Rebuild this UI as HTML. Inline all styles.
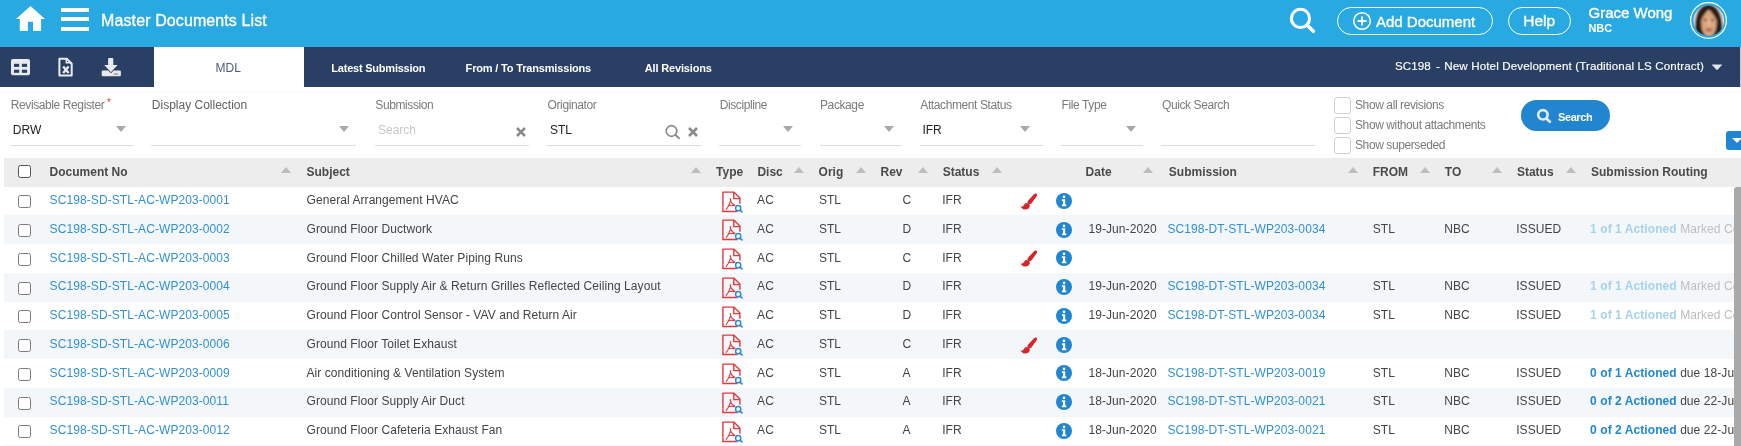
<!DOCTYPE html>
<html><head><meta charset="utf-8">
<style>
*{margin:0;padding:0;box-sizing:border-box}
html,body{width:1741px;height:446px;overflow:hidden;background:#fff;font-family:"Liberation Sans",sans-serif}
.a{position:absolute;white-space:nowrap}
#hdr{position:absolute;left:0;top:0;width:1741px;height:47px;background:#29a9e1}
#nav{position:absolute;left:0;top:47px;width:1741px;height:39.5px;background:#2a3f64}
.t{font-size:12px;line-height:14px}
.lbl{color:#7b7b7b;letter-spacing:-0.4px}
.val{color:#222}
.ul{position:absolute;top:144.5px;height:1px;background:#dcdcdc}
.car{position:absolute;top:125.9px;margin-left:-0.6px;width:0;height:0;border-left:5.2px solid transparent;border-right:5.2px solid transparent;border-top:6px solid #a9a9a9}
.cb{position:absolute;left:1334px;width:17px;height:17px;border:1px solid #cfcfcf;border-radius:3px;background:#fff}
#th{position:absolute;left:4.25px;top:157.75px;width:1737px;height:28.9px;background:#ededed}
.hc{position:absolute;top:164.5px;font-size:12px;line-height:14px;font-weight:bold;color:#4a4a4a}
.sa{position:absolute;top:167.1px;width:0;height:0;border-left:5.8px solid transparent;border-right:5.8px solid transparent;border-bottom:6.2px solid #bdbdbd}
.row{position:absolute;left:4.25px;width:1730px;height:28.75px}
.row.s{background:#f4f7fa}
.c{position:absolute;font-size:12px;line-height:14px;color:#444;white-space:nowrap;letter-spacing:0.07px}
.lk{color:#3190d4;letter-spacing:0.085px}
.rcb{position:absolute;left:13.5px;top:8.8px;width:13px;height:13px;border:1.3px solid #7a7a7a;border-radius:2.5px;background:#fff}
</style></head><body><div id="wrap" style="position:absolute;left:0;top:0;width:1741px;height:446px;will-change:transform">
<div id="hdr"></div>
<!-- home icon -->
<svg class="a" style="left:15px;top:5px" width="31" height="28" viewBox="0 0 31 28">
<path d="M15.5 1 L30 14 L26.1 14 L26.1 26 L18 26 L18 16.8 L12.9 16.8 L12.9 26 L4.8 26 L4.8 14 L1 14 Z" fill="#fff"/>
</svg>
<!-- hamburger -->
<div class="a" style="left:61px;top:8px;width:28px;height:4px;background:#fff"></div>
<div class="a" style="left:61px;top:17.4px;width:28px;height:4px;background:#fff"></div>
<div class="a" style="left:61px;top:26.9px;width:28px;height:4px;background:#fff"></div>
<div class="a" style="left:101.1px;top:12.3px;font-size:16px;line-height:18px;color:#fff;letter-spacing:0.1px;-webkit-text-stroke:0.35px #fff">Master Documents List</div>

<!-- right header -->
<svg class="a" style="left:1287px;top:5px" width="32" height="31" viewBox="0 0 32 31">
<circle cx="13.5" cy="13.4" r="9.1" fill="none" stroke="#fff" stroke-width="3"/>
<path d="M20.3 20.3 L26.3 26.3" stroke="#fff" stroke-width="3.6" stroke-linecap="round"/>
</svg>
<div class="a" style="left:1337px;top:7px;width:156px;height:28px;border:1px solid #fff;border-radius:14px"></div>
<svg class="a" style="left:1352px;top:11px" width="20" height="20" viewBox="0 0 20 20">
<circle cx="10" cy="10" r="8.3" fill="none" stroke="#fff" stroke-width="1.6"/>
<path d="M10 5.5 V14.5 M5.5 10 H14.5" stroke="#fff" stroke-width="1.8"/>
</svg>
<div class="a" style="left:1376px;top:13px;font-size:15px;line-height:17px;color:#fff;-webkit-text-stroke:0.35px #fff">Add Document</div>
<div class="a" style="left:1508px;top:7px;width:63px;height:28px;border:1px solid #fff;border-radius:14px"></div>
<div class="a" style="left:1523.3px;top:12px;font-size:15.5px;line-height:17px;color:#fff;-webkit-text-stroke:0.35px #fff">Help</div>
<div class="a" style="left:1588.5px;top:3.6px;font-size:15px;line-height:17px;color:#fff;-webkit-text-stroke:0.35px #fff">Grace Wong</div>
<div class="a" style="left:1588.5px;top:22px;font-size:10.9px;line-height:12px;color:#fff;font-weight:bold">NBC</div>
<svg class="a" style="left:1689px;top:1px" width="39" height="39" viewBox="0 0 39 39">
<circle cx="19.5" cy="19.5" r="17.9" fill="none" stroke="#fff" stroke-width="1.3"/>
<defs><clipPath id="av"><circle cx="19.8" cy="19.5" r="15.3"/></clipPath>
<filter id="bl" x="-20%" y="-20%" width="140%" height="140%"><feGaussianBlur stdDeviation="0.9"/></filter></defs>
<g clip-path="url(#av)"><g filter="url(#bl)">
<rect x="0" y="0" width="39" height="39" fill="#e9e0dc"/>
<path d="M6.5 40 C5 24 5 5 19.5 3 C34 5 34.5 24 33 40 Z" fill="#2d1e18"/>
<path d="M12.3 20 C12.5 12 15.5 8.5 19.8 9.2 C24.5 8.5 27.5 12 27.6 20 C27.8 29 25 35.5 19.9 35.8 C14.8 35.5 12 29 12.3 20 Z" fill="#d9a67f"/>
<path d="M11.8 18 C12 11 15 7.5 19.8 8.6 C17 11 14.5 14.5 12.3 19 Z" fill="#2d1e18"/>
<path d="M27.8 18 C27.6 11 24.6 7.5 19.8 8.6 C22.6 11 25 14.5 27.3 19 Z" fill="#2d1e18"/>
<ellipse cx="16.2" cy="19" rx="1.7" ry="0.9" fill="#5a3a2c"/>
<ellipse cx="23.6" cy="19" rx="1.7" ry="0.9" fill="#5a3a2c"/>
<ellipse cx="19.9" cy="28.8" rx="3.6" ry="1.6" fill="#b45f5c"/>
<rect x="18.8" y="18" width="2.2" height="7" fill="#e7bb98"/>
</g></g>
</svg>

<div id="nav"></div>
<!-- tool icons -->
<svg class="a" style="left:10px;top:58px" width="21" height="19" viewBox="0 0 21 19">
<rect x="1" y="1" width="19" height="16.2" rx="2" fill="#e9eaee"/>
<rect x="4" y="5.8" width="5.2" height="3.1" fill="#2a3f64"/>
<rect x="11.9" y="5.8" width="5.2" height="3.1" fill="#2a3f64"/>
<rect x="4" y="11.7" width="5.2" height="3.1" fill="#2a3f64"/>
<rect x="11.9" y="11.7" width="5.2" height="3.1" fill="#2a3f64"/>
</svg>
<svg class="a" style="left:57px;top:57px" width="18" height="21" viewBox="0 0 18 21">
<path d="M2.4 1.8 H9.8 L14.7 6.7 V18.5 H2.4 Z" fill="none" stroke="#e9eaee" stroke-width="2" stroke-linejoin="round"/>
<path d="M9.3 1.8 V5.8 H14.7" fill="none" stroke="#e9eaee" stroke-width="1.5"/>
<path d="M6.2 9.6 L11.6 16 M11.6 9.6 L6.2 16" stroke="#e9eaee" stroke-width="2.3"/>
</svg>
<svg class="a" style="left:100px;top:57px" width="22" height="21" viewBox="0 0 22 21">
<rect x="8.1" y="1" width="5.2" height="9" rx="1" fill="#e9eaee"/>
<path d="M4.3 8.1 H17.6 L10.95 15.3 Z" fill="#e9eaee"/>
<path d="M2.9 13.5 H8.2 L10.95 16.2 L13.7 13.5 H19.7 Q20.9 13.5 20.9 14.7 V18 Q20.9 19.2 19.7 19.2 H2.9 Q1.7 19.2 1.7 18 V14.7 Q1.7 13.5 2.9 13.5 Z" fill="#e9eaee"/>
<rect x="13.8" y="16.6" width="4.4" height="0.9" fill="#5a6a88"/>
</svg>
<!-- tabs -->
<div class="a" style="left:154px;top:47px;width:150px;height:40px;background:#fff"></div>
<div class="a t" style="left:215.5px;top:61px;color:#4b5b78;letter-spacing:0.1px">MDL</div>
<div class="a" style="left:331.3px;top:61.4px;font-size:11px;line-height:14px;color:#fff;font-weight:bold;letter-spacing:-0.22px">Latest Submission</div>
<div class="a" style="left:465.6px;top:61.4px;font-size:11px;line-height:14px;color:#fff;font-weight:bold;letter-spacing:-0.17px">From / To Transmissions</div>
<div class="a" style="left:644.8px;top:61.4px;font-size:11px;line-height:14px;color:#fff;font-weight:bold;letter-spacing:-0.16px">All Revisions</div>
<div class="a" style="left:1394.9px;top:59.3px;font-size:11.6px;line-height:14px;color:#fff;letter-spacing:0.1px;-webkit-text-stroke:0.15px #fff">SC198</div><div class="a" style="left:1436px;top:59.3px;font-size:11.6px;line-height:14px;color:#fff;-webkit-text-stroke:0.15px #fff">-</div><div class="a" style="left:1444.3px;top:59.3px;font-size:11.6px;line-height:14px;color:#fff;letter-spacing:0.12px;-webkit-text-stroke:0.15px #fff">New Hotel Development (Traditional LS Contract)</div>
<svg class="a" style="left:1711px;top:63px" width="12" height="8" viewBox="0 0 12 8"><path d="M1.6 1.4 H10.4 Q11.4 1.4 10.7 2.2 L6.8 6.4 Q6 7.2 5.2 6.4 L1.3 2.2 Q0.6 1.4 1.6 1.4 Z" fill="#e2e5ec"/></svg>
<div class="a" style="left:1740px;top:47px;width:1px;height:40px;background:#c9ccd3"></div>

<!-- filters -->
<div class="a" style="left:0;top:91px;width:1741px;height:2px;background:#fbfbfb"></div>
<div class="a t lbl" style="left:10.8px;top:98px">Revisable Register</div>
<div class="a" style="left:107px;top:98px;font-size:10px;line-height:10px;color:#e53935">*</div>
<div class="a t" style="left:151.8px;top:98px;color:#616161">Display Collection</div>
<div class="a t lbl" style="left:375.3px;top:98px">Submission</div>
<div class="a t lbl" style="left:547.6px;top:98px">Originator</div>
<div class="a t lbl" style="left:719.7px;top:98px">Discipline</div>
<div class="a t lbl" style="left:820px;top:98px">Package</div>
<div class="a t lbl" style="left:920.3px;top:98px">Attachment Status</div>
<div class="a t lbl" style="left:1061.6px;top:98px">File Type</div>
<div class="a t lbl" style="left:1162px;top:98px">Quick Search</div>

<div class="a t val" style="left:12.8px;top:123px">DRW</div>
<div class="a t" style="left:378px;top:123px;color:#c8c8c8">Search</div>
<div class="a t val" style="left:550px;top:123px">STL</div>
<div class="a t val" style="left:922.4px;top:123px">IFR</div>

<div class="ul" style="left:10px;width:123px"></div>
<div class="ul" style="left:151px;width:205px"></div>
<div class="ul" style="left:375px;width:154px"></div>
<div class="ul" style="left:547px;width:154px"></div>
<div class="ul" style="left:719px;width:82px"></div>
<div class="ul" style="left:819.5px;width:81.5px"></div>
<div class="ul" style="left:920px;width:123px"></div>
<div class="ul" style="left:1061px;width:82px"></div>
<div class="ul" style="left:1161px;width:154px"></div>

<div class="car" style="left:116.5px"></div>
<div class="car" style="left:340px"></div>
<div class="car" style="left:784px"></div>
<div class="car" style="left:884.5px"></div>
<div class="car" style="left:1021px"></div>
<div class="car" style="left:1126.7px"></div>

<svg class="a" style="left:515px;top:126px" width="12" height="12" viewBox="0 0 12 12"><path d="M2 2 L10 10 M10 2 L2 10" stroke="#8a8a8a" stroke-width="2.6"/></svg>
<svg class="a" style="left:687px;top:126px" width="12" height="12" viewBox="0 0 12 12"><path d="M2 2 L10 10 M10 2 L2 10" stroke="#8a8a8a" stroke-width="2.6"/></svg>
<svg class="a" style="left:664px;top:124px" width="17" height="16" viewBox="0 0 17 16">
<circle cx="7.5" cy="7" r="5.3" fill="none" stroke="#8a8a8a" stroke-width="1.7"/>
<path d="M11.3 10.8 L15 14.2" stroke="#8a8a8a" stroke-width="1.9" stroke-linecap="round"/>
</svg>

<div class="cb" style="top:97px"></div>
<div class="cb" style="top:117px"></div>
<div class="cb" style="top:137px"></div>
<div class="a t lbl" style="left:1355px;top:98px">Show all revisions</div>
<div class="a t lbl" style="left:1355px;top:118px">Show without attachments</div>
<div class="a t lbl" style="left:1355px;top:138px">Show superseded</div>

<div class="a" style="left:1521px;top:100px;width:89px;height:31px;border-radius:15.5px;background:#2185d0"></div>
<svg class="a" style="left:1535px;top:107px" width="18" height="17" viewBox="0 0 18 17">
<circle cx="7.9" cy="7.8" r="4.7" fill="none" stroke="#dfeaf6" stroke-width="2.7"/>
<path d="M11.4 11.4 L14.8 14.8" stroke="#dfeaf6" stroke-width="2.8" stroke-linecap="round"/>
</svg>
<div class="a" style="left:1558px;top:110.5px;font-size:11px;line-height:13px;color:#fff;font-weight:bold;letter-spacing:-0.4px">Search</div>
<div class="a" style="left:1726px;top:130.8px;width:20px;height:19.3px;border-radius:3px;background:#2185d0"></div>
<div class="a" style="left:1731.5px;top:138px;width:0;height:0;border-left:5px solid transparent;border-right:5px solid transparent;border-top:5.5px solid #fff"></div>

<!-- table header -->
<div id="th"></div>
<div class="a" style="left:18px;top:165px;width:13px;height:13px;border:1.3px solid #555;border-radius:2.5px;background:#fff"></div>
<div class="hc" style="left:49.6px">Document No</div>
<div class="hc" style="left:306.5px">Subject</div>
<div class="hc" style="left:716.1px">Type</div>
<div class="hc" style="left:757.4px">Disc</div>
<div class="hc" style="left:818.6px">Orig</div>
<div class="hc" style="left:880.5px">Rev</div>
<div class="hc" style="left:942.7px">Status</div>
<div class="hc" style="left:1085.6px">Date</div>
<div class="hc" style="left:1168.8px">Submission</div>
<div class="hc" style="left:1372.7px">FROM</div>
<div class="hc" style="left:1444.8px">TO</div>
<div class="hc" style="left:1516.9px">Status</div>
<div class="hc" style="left:1591px">Submission Routing</div>
<div class="sa" style="left:281px"></div>
<div class="sa" style="left:691.4px"></div>
<div class="sa" style="left:794.4px"></div>
<div class="sa" style="left:855.6px"></div>
<div class="sa" style="left:917.8px"></div>
<div class="sa" style="left:991.5px"></div>
<div class="sa" style="left:1142.5px"></div>
<div class="sa" style="left:1348px"></div>
<div class="sa" style="left:1420px"></div>
<div class="sa" style="left:1492px"></div>
<div class="sa" style="left:1565.7px"></div>

<div class="row" style="top:186.60px">
<div class="rcb"></div>
<div class="c lk" style="left:45.35px;top:6.60px">SC198-SD-STL-AC-WP203-0001</div>
<div class="c" style="left:302.25px;top:6.60px">General Arrangement HVAC</div>
<svg class="a" style="left:714.65px;top:3.1px" width="24" height="23" viewBox="0 0 24 23">
<path d="M3.9 17.6 V2.1 H14.8 L20.9 8.1 V13.8" fill="none" stroke="#e0393e" stroke-width="1.4" stroke-linejoin="round"/>
<path d="M3.9 17.6 V21.5 H18.4" fill="none" stroke="#e0393e" stroke-width="1.4"/>
<path d="M14.8 2.1 V8.6 H20.9" fill="none" stroke="#e0393e" stroke-width="1.4"/>
<path d="M11.2 8.6 C11.6 11.5 12.8 14 16 15.2 M11.5 11.2 C10.5 14.8 9 17.6 7.2 19.4 M9.3 15.7 C11.5 15.1 13.5 15.2 15 15.8" fill="none" stroke="#e0393e" stroke-width="1.15" stroke-linecap="round"/>
<circle cx="19.2" cy="18.2" r="2.6" fill="#fff" stroke="#2f8ad6" stroke-width="1.5"/>
<path d="M21 20.1 L23 21.9" stroke="#2f8ad6" stroke-width="1.7" stroke-linecap="round"/>
</svg>
<div class="c" style="left:752.85px;top:6.60px">AC</div>
<div class="c" style="left:814.65px;top:6.60px">STL</div>
<div class="c" style="left:898.35px;top:6.60px">C</div>
<div class="c" style="left:937.95px;top:6.60px">IFR</div>
<svg class="a" style="left:1015.75px;top:6.4px" width="18" height="18" viewBox="0 0 18 18">
<path d="M13.8 1.4 C14.8 0.3 16.8 0.2 17 1.5 C17.2 2.3 16.9 3 16.5 3.6 L11.4 10.6 C10.6 11.5 9.1 11.6 8.2 10.8 C7.3 10 7.3 8.7 8 7.8 Z" fill="#d9252a"/>
<path d="M7.1 10.1 C8.9 10.3 10.1 11.8 9.8 13.6 C9.3 15.8 6.7 16.9 4 16.4 C2.5 16.1 1.3 15.1 0.6 13.6 C2 14 3.1 13.5 3.8 12.3 C4.7 10.8 5.6 10 7.1 10.1 Z" fill="#d9252a"/>
</svg>
<svg class="a" style="left:1051.75px;top:6.2px" width="16" height="16" viewBox="0 0 16 16">
<circle cx="8" cy="8" r="8" fill="#2185d0"/>
<circle cx="8" cy="3.9" r="1.3" fill="#fff"/>
<path d="M5.9 6.3 H9.2 V11.6 H10.3 V13.2 H5.9 V11.6 H7 V7.9 H5.9 Z" fill="#fff"/>
</svg>
</div>
<div class="row s" style="top:215.35px">
<div class="rcb"></div>
<div class="c lk" style="left:45.35px;top:6.60px">SC198-SD-STL-AC-WP203-0002</div>
<div class="c" style="left:302.25px;top:6.60px">Ground Floor Ductwork</div>
<svg class="a" style="left:714.65px;top:3.1px" width="24" height="23" viewBox="0 0 24 23">
<path d="M3.9 17.6 V2.1 H14.8 L20.9 8.1 V13.8" fill="none" stroke="#e0393e" stroke-width="1.4" stroke-linejoin="round"/>
<path d="M3.9 17.6 V21.5 H18.4" fill="none" stroke="#e0393e" stroke-width="1.4"/>
<path d="M14.8 2.1 V8.6 H20.9" fill="none" stroke="#e0393e" stroke-width="1.4"/>
<path d="M11.2 8.6 C11.6 11.5 12.8 14 16 15.2 M11.5 11.2 C10.5 14.8 9 17.6 7.2 19.4 M9.3 15.7 C11.5 15.1 13.5 15.2 15 15.8" fill="none" stroke="#e0393e" stroke-width="1.15" stroke-linecap="round"/>
<circle cx="19.2" cy="18.2" r="2.6" fill="#fff" stroke="#2f8ad6" stroke-width="1.5"/>
<path d="M21 20.1 L23 21.9" stroke="#2f8ad6" stroke-width="1.7" stroke-linecap="round"/>
</svg>
<div class="c" style="left:752.85px;top:6.60px">AC</div>
<div class="c" style="left:814.65px;top:6.60px">STL</div>
<div class="c" style="left:898.35px;top:6.60px">D</div>
<div class="c" style="left:937.95px;top:6.60px">IFR</div>
<svg class="a" style="left:1051.75px;top:6.2px" width="16" height="16" viewBox="0 0 16 16">
<circle cx="8" cy="8" r="8" fill="#2185d0"/>
<circle cx="8" cy="3.9" r="1.3" fill="#fff"/>
<path d="M5.9 6.3 H9.2 V11.6 H10.3 V13.2 H5.9 V11.6 H7 V7.9 H5.9 Z" fill="#fff"/>
</svg>
<div class="c" style="left:1084.25px;top:6.60px">19-Jun-2020</div>
<div class="c lk" style="left:1163.15px;top:6.60px">SC198-DT-STL-WP203-0034</div>
<div class="c" style="left:1368.45px;top:6.60px">STL</div>
<div class="c" style="left:1440.05px;top:6.60px">NBC</div>
<div class="c" style="left:1511.95px;top:6.60px">ISSUED</div>
<div class="c" style="left:1585.85px;top:6.60px;width:144.10px;overflow:hidden"><b style="color:#a6d2ea">1 of 1 Actioned</b> <span style="color:#bdbdbd">Marked Complete</span></div>
</div>
<div class="row" style="top:244.10px">
<div class="rcb"></div>
<div class="c lk" style="left:45.35px;top:6.60px">SC198-SD-STL-AC-WP203-0003</div>
<div class="c" style="left:302.25px;top:6.60px">Ground Floor Chilled Water Piping Runs</div>
<svg class="a" style="left:714.65px;top:3.1px" width="24" height="23" viewBox="0 0 24 23">
<path d="M3.9 17.6 V2.1 H14.8 L20.9 8.1 V13.8" fill="none" stroke="#e0393e" stroke-width="1.4" stroke-linejoin="round"/>
<path d="M3.9 17.6 V21.5 H18.4" fill="none" stroke="#e0393e" stroke-width="1.4"/>
<path d="M14.8 2.1 V8.6 H20.9" fill="none" stroke="#e0393e" stroke-width="1.4"/>
<path d="M11.2 8.6 C11.6 11.5 12.8 14 16 15.2 M11.5 11.2 C10.5 14.8 9 17.6 7.2 19.4 M9.3 15.7 C11.5 15.1 13.5 15.2 15 15.8" fill="none" stroke="#e0393e" stroke-width="1.15" stroke-linecap="round"/>
<circle cx="19.2" cy="18.2" r="2.6" fill="#fff" stroke="#2f8ad6" stroke-width="1.5"/>
<path d="M21 20.1 L23 21.9" stroke="#2f8ad6" stroke-width="1.7" stroke-linecap="round"/>
</svg>
<div class="c" style="left:752.85px;top:6.60px">AC</div>
<div class="c" style="left:814.65px;top:6.60px">STL</div>
<div class="c" style="left:898.35px;top:6.60px">C</div>
<div class="c" style="left:937.95px;top:6.60px">IFR</div>
<svg class="a" style="left:1015.75px;top:6.4px" width="18" height="18" viewBox="0 0 18 18">
<path d="M13.8 1.4 C14.8 0.3 16.8 0.2 17 1.5 C17.2 2.3 16.9 3 16.5 3.6 L11.4 10.6 C10.6 11.5 9.1 11.6 8.2 10.8 C7.3 10 7.3 8.7 8 7.8 Z" fill="#d9252a"/>
<path d="M7.1 10.1 C8.9 10.3 10.1 11.8 9.8 13.6 C9.3 15.8 6.7 16.9 4 16.4 C2.5 16.1 1.3 15.1 0.6 13.6 C2 14 3.1 13.5 3.8 12.3 C4.7 10.8 5.6 10 7.1 10.1 Z" fill="#d9252a"/>
</svg>
<svg class="a" style="left:1051.75px;top:6.2px" width="16" height="16" viewBox="0 0 16 16">
<circle cx="8" cy="8" r="8" fill="#2185d0"/>
<circle cx="8" cy="3.9" r="1.3" fill="#fff"/>
<path d="M5.9 6.3 H9.2 V11.6 H10.3 V13.2 H5.9 V11.6 H7 V7.9 H5.9 Z" fill="#fff"/>
</svg>
</div>
<div class="row s" style="top:272.85px">
<div class="rcb"></div>
<div class="c lk" style="left:45.35px;top:6.60px">SC198-SD-STL-AC-WP203-0004</div>
<div class="c" style="left:302.25px;top:6.60px">Ground Floor Supply Air &amp; Return Grilles Reflected Ceiling Layout</div>
<svg class="a" style="left:714.65px;top:3.1px" width="24" height="23" viewBox="0 0 24 23">
<path d="M3.9 17.6 V2.1 H14.8 L20.9 8.1 V13.8" fill="none" stroke="#e0393e" stroke-width="1.4" stroke-linejoin="round"/>
<path d="M3.9 17.6 V21.5 H18.4" fill="none" stroke="#e0393e" stroke-width="1.4"/>
<path d="M14.8 2.1 V8.6 H20.9" fill="none" stroke="#e0393e" stroke-width="1.4"/>
<path d="M11.2 8.6 C11.6 11.5 12.8 14 16 15.2 M11.5 11.2 C10.5 14.8 9 17.6 7.2 19.4 M9.3 15.7 C11.5 15.1 13.5 15.2 15 15.8" fill="none" stroke="#e0393e" stroke-width="1.15" stroke-linecap="round"/>
<circle cx="19.2" cy="18.2" r="2.6" fill="#fff" stroke="#2f8ad6" stroke-width="1.5"/>
<path d="M21 20.1 L23 21.9" stroke="#2f8ad6" stroke-width="1.7" stroke-linecap="round"/>
</svg>
<div class="c" style="left:752.85px;top:6.60px">AC</div>
<div class="c" style="left:814.65px;top:6.60px">STL</div>
<div class="c" style="left:898.35px;top:6.60px">D</div>
<div class="c" style="left:937.95px;top:6.60px">IFR</div>
<svg class="a" style="left:1051.75px;top:6.2px" width="16" height="16" viewBox="0 0 16 16">
<circle cx="8" cy="8" r="8" fill="#2185d0"/>
<circle cx="8" cy="3.9" r="1.3" fill="#fff"/>
<path d="M5.9 6.3 H9.2 V11.6 H10.3 V13.2 H5.9 V11.6 H7 V7.9 H5.9 Z" fill="#fff"/>
</svg>
<div class="c" style="left:1084.25px;top:6.60px">19-Jun-2020</div>
<div class="c lk" style="left:1163.15px;top:6.60px">SC198-DT-STL-WP203-0034</div>
<div class="c" style="left:1368.45px;top:6.60px">STL</div>
<div class="c" style="left:1440.05px;top:6.60px">NBC</div>
<div class="c" style="left:1511.95px;top:6.60px">ISSUED</div>
<div class="c" style="left:1585.85px;top:6.60px;width:144.10px;overflow:hidden"><b style="color:#a6d2ea">1 of 1 Actioned</b> <span style="color:#bdbdbd">Marked Complete</span></div>
</div>
<div class="row" style="top:301.60px">
<div class="rcb"></div>
<div class="c lk" style="left:45.35px;top:6.60px">SC198-SD-STL-AC-WP203-0005</div>
<div class="c" style="left:302.25px;top:6.60px">Ground Floor Control Sensor - VAV and Return Air</div>
<svg class="a" style="left:714.65px;top:3.1px" width="24" height="23" viewBox="0 0 24 23">
<path d="M3.9 17.6 V2.1 H14.8 L20.9 8.1 V13.8" fill="none" stroke="#e0393e" stroke-width="1.4" stroke-linejoin="round"/>
<path d="M3.9 17.6 V21.5 H18.4" fill="none" stroke="#e0393e" stroke-width="1.4"/>
<path d="M14.8 2.1 V8.6 H20.9" fill="none" stroke="#e0393e" stroke-width="1.4"/>
<path d="M11.2 8.6 C11.6 11.5 12.8 14 16 15.2 M11.5 11.2 C10.5 14.8 9 17.6 7.2 19.4 M9.3 15.7 C11.5 15.1 13.5 15.2 15 15.8" fill="none" stroke="#e0393e" stroke-width="1.15" stroke-linecap="round"/>
<circle cx="19.2" cy="18.2" r="2.6" fill="#fff" stroke="#2f8ad6" stroke-width="1.5"/>
<path d="M21 20.1 L23 21.9" stroke="#2f8ad6" stroke-width="1.7" stroke-linecap="round"/>
</svg>
<div class="c" style="left:752.85px;top:6.60px">AC</div>
<div class="c" style="left:814.65px;top:6.60px">STL</div>
<div class="c" style="left:898.35px;top:6.60px">D</div>
<div class="c" style="left:937.95px;top:6.60px">IFR</div>
<svg class="a" style="left:1051.75px;top:6.2px" width="16" height="16" viewBox="0 0 16 16">
<circle cx="8" cy="8" r="8" fill="#2185d0"/>
<circle cx="8" cy="3.9" r="1.3" fill="#fff"/>
<path d="M5.9 6.3 H9.2 V11.6 H10.3 V13.2 H5.9 V11.6 H7 V7.9 H5.9 Z" fill="#fff"/>
</svg>
<div class="c" style="left:1084.25px;top:6.60px">19-Jun-2020</div>
<div class="c lk" style="left:1163.15px;top:6.60px">SC198-DT-STL-WP203-0034</div>
<div class="c" style="left:1368.45px;top:6.60px">STL</div>
<div class="c" style="left:1440.05px;top:6.60px">NBC</div>
<div class="c" style="left:1511.95px;top:6.60px">ISSUED</div>
<div class="c" style="left:1585.85px;top:6.60px;width:144.10px;overflow:hidden"><b style="color:#a6d2ea">1 of 1 Actioned</b> <span style="color:#bdbdbd">Marked Complete</span></div>
</div>
<div class="row s" style="top:330.35px">
<div class="rcb"></div>
<div class="c lk" style="left:45.35px;top:6.60px">SC198-SD-STL-AC-WP203-0006</div>
<div class="c" style="left:302.25px;top:6.60px">Ground Floor Toilet Exhaust</div>
<svg class="a" style="left:714.65px;top:3.1px" width="24" height="23" viewBox="0 0 24 23">
<path d="M3.9 17.6 V2.1 H14.8 L20.9 8.1 V13.8" fill="none" stroke="#e0393e" stroke-width="1.4" stroke-linejoin="round"/>
<path d="M3.9 17.6 V21.5 H18.4" fill="none" stroke="#e0393e" stroke-width="1.4"/>
<path d="M14.8 2.1 V8.6 H20.9" fill="none" stroke="#e0393e" stroke-width="1.4"/>
<path d="M11.2 8.6 C11.6 11.5 12.8 14 16 15.2 M11.5 11.2 C10.5 14.8 9 17.6 7.2 19.4 M9.3 15.7 C11.5 15.1 13.5 15.2 15 15.8" fill="none" stroke="#e0393e" stroke-width="1.15" stroke-linecap="round"/>
<circle cx="19.2" cy="18.2" r="2.6" fill="#fff" stroke="#2f8ad6" stroke-width="1.5"/>
<path d="M21 20.1 L23 21.9" stroke="#2f8ad6" stroke-width="1.7" stroke-linecap="round"/>
</svg>
<div class="c" style="left:752.85px;top:6.60px">AC</div>
<div class="c" style="left:814.65px;top:6.60px">STL</div>
<div class="c" style="left:898.35px;top:6.60px">C</div>
<div class="c" style="left:937.95px;top:6.60px">IFR</div>
<svg class="a" style="left:1015.75px;top:6.4px" width="18" height="18" viewBox="0 0 18 18">
<path d="M13.8 1.4 C14.8 0.3 16.8 0.2 17 1.5 C17.2 2.3 16.9 3 16.5 3.6 L11.4 10.6 C10.6 11.5 9.1 11.6 8.2 10.8 C7.3 10 7.3 8.7 8 7.8 Z" fill="#d9252a"/>
<path d="M7.1 10.1 C8.9 10.3 10.1 11.8 9.8 13.6 C9.3 15.8 6.7 16.9 4 16.4 C2.5 16.1 1.3 15.1 0.6 13.6 C2 14 3.1 13.5 3.8 12.3 C4.7 10.8 5.6 10 7.1 10.1 Z" fill="#d9252a"/>
</svg>
<svg class="a" style="left:1051.75px;top:6.2px" width="16" height="16" viewBox="0 0 16 16">
<circle cx="8" cy="8" r="8" fill="#2185d0"/>
<circle cx="8" cy="3.9" r="1.3" fill="#fff"/>
<path d="M5.9 6.3 H9.2 V11.6 H10.3 V13.2 H5.9 V11.6 H7 V7.9 H5.9 Z" fill="#fff"/>
</svg>
</div>
<div class="row" style="top:359.10px">
<div class="rcb"></div>
<div class="c lk" style="left:45.35px;top:6.60px">SC198-SD-STL-AC-WP203-0009</div>
<div class="c" style="left:302.25px;top:6.60px">Air conditioning &amp; Ventilation System</div>
<svg class="a" style="left:714.65px;top:3.1px" width="24" height="23" viewBox="0 0 24 23">
<path d="M3.9 17.6 V2.1 H14.8 L20.9 8.1 V13.8" fill="none" stroke="#e0393e" stroke-width="1.4" stroke-linejoin="round"/>
<path d="M3.9 17.6 V21.5 H18.4" fill="none" stroke="#e0393e" stroke-width="1.4"/>
<path d="M14.8 2.1 V8.6 H20.9" fill="none" stroke="#e0393e" stroke-width="1.4"/>
<path d="M11.2 8.6 C11.6 11.5 12.8 14 16 15.2 M11.5 11.2 C10.5 14.8 9 17.6 7.2 19.4 M9.3 15.7 C11.5 15.1 13.5 15.2 15 15.8" fill="none" stroke="#e0393e" stroke-width="1.15" stroke-linecap="round"/>
<circle cx="19.2" cy="18.2" r="2.6" fill="#fff" stroke="#2f8ad6" stroke-width="1.5"/>
<path d="M21 20.1 L23 21.9" stroke="#2f8ad6" stroke-width="1.7" stroke-linecap="round"/>
</svg>
<div class="c" style="left:752.85px;top:6.60px">AC</div>
<div class="c" style="left:814.65px;top:6.60px">STL</div>
<div class="c" style="left:898.35px;top:6.60px">A</div>
<div class="c" style="left:937.95px;top:6.60px">IFR</div>
<svg class="a" style="left:1051.75px;top:6.2px" width="16" height="16" viewBox="0 0 16 16">
<circle cx="8" cy="8" r="8" fill="#2185d0"/>
<circle cx="8" cy="3.9" r="1.3" fill="#fff"/>
<path d="M5.9 6.3 H9.2 V11.6 H10.3 V13.2 H5.9 V11.6 H7 V7.9 H5.9 Z" fill="#fff"/>
</svg>
<div class="c" style="left:1084.25px;top:6.60px">18-Jun-2020</div>
<div class="c lk" style="left:1163.15px;top:6.60px">SC198-DT-STL-WP203-0019</div>
<div class="c" style="left:1368.45px;top:6.60px">STL</div>
<div class="c" style="left:1440.05px;top:6.60px">NBC</div>
<div class="c" style="left:1511.95px;top:6.60px">ISSUED</div>
<div class="c" style="left:1585.85px;top:6.60px;width:144.10px;overflow:hidden"><b style="color:#2188d2">0 of 1 Actioned</b> <span style="color:#444">due 18-Jun-2020</span></div>
</div>
<div class="row s" style="top:387.85px">
<div class="rcb"></div>
<div class="c lk" style="left:45.35px;top:6.60px">SC198-SD-STL-AC-WP203-0011</div>
<div class="c" style="left:302.25px;top:6.60px">Ground Floor Supply Air Duct</div>
<svg class="a" style="left:714.65px;top:3.1px" width="24" height="23" viewBox="0 0 24 23">
<path d="M3.9 17.6 V2.1 H14.8 L20.9 8.1 V13.8" fill="none" stroke="#e0393e" stroke-width="1.4" stroke-linejoin="round"/>
<path d="M3.9 17.6 V21.5 H18.4" fill="none" stroke="#e0393e" stroke-width="1.4"/>
<path d="M14.8 2.1 V8.6 H20.9" fill="none" stroke="#e0393e" stroke-width="1.4"/>
<path d="M11.2 8.6 C11.6 11.5 12.8 14 16 15.2 M11.5 11.2 C10.5 14.8 9 17.6 7.2 19.4 M9.3 15.7 C11.5 15.1 13.5 15.2 15 15.8" fill="none" stroke="#e0393e" stroke-width="1.15" stroke-linecap="round"/>
<circle cx="19.2" cy="18.2" r="2.6" fill="#fff" stroke="#2f8ad6" stroke-width="1.5"/>
<path d="M21 20.1 L23 21.9" stroke="#2f8ad6" stroke-width="1.7" stroke-linecap="round"/>
</svg>
<div class="c" style="left:752.85px;top:6.60px">AC</div>
<div class="c" style="left:814.65px;top:6.60px">STL</div>
<div class="c" style="left:898.35px;top:6.60px">A</div>
<div class="c" style="left:937.95px;top:6.60px">IFR</div>
<svg class="a" style="left:1051.75px;top:6.2px" width="16" height="16" viewBox="0 0 16 16">
<circle cx="8" cy="8" r="8" fill="#2185d0"/>
<circle cx="8" cy="3.9" r="1.3" fill="#fff"/>
<path d="M5.9 6.3 H9.2 V11.6 H10.3 V13.2 H5.9 V11.6 H7 V7.9 H5.9 Z" fill="#fff"/>
</svg>
<div class="c" style="left:1084.25px;top:6.60px">18-Jun-2020</div>
<div class="c lk" style="left:1163.15px;top:6.60px">SC198-DT-STL-WP203-0021</div>
<div class="c" style="left:1368.45px;top:6.60px">STL</div>
<div class="c" style="left:1440.05px;top:6.60px">NBC</div>
<div class="c" style="left:1511.95px;top:6.60px">ISSUED</div>
<div class="c" style="left:1585.85px;top:6.60px;width:144.10px;overflow:hidden"><b style="color:#2188d2">0 of 2 Actioned</b> <span style="color:#444">due 22-Jun-2020</span></div>
</div>
<div class="row" style="top:416.60px">
<div class="rcb"></div>
<div class="c lk" style="left:45.35px;top:6.60px">SC198-SD-STL-AC-WP203-0012</div>
<div class="c" style="left:302.25px;top:6.60px">Ground Floor Cafeteria Exhaust Fan</div>
<svg class="a" style="left:714.65px;top:3.1px" width="24" height="23" viewBox="0 0 24 23">
<path d="M3.9 17.6 V2.1 H14.8 L20.9 8.1 V13.8" fill="none" stroke="#e0393e" stroke-width="1.4" stroke-linejoin="round"/>
<path d="M3.9 17.6 V21.5 H18.4" fill="none" stroke="#e0393e" stroke-width="1.4"/>
<path d="M14.8 2.1 V8.6 H20.9" fill="none" stroke="#e0393e" stroke-width="1.4"/>
<path d="M11.2 8.6 C11.6 11.5 12.8 14 16 15.2 M11.5 11.2 C10.5 14.8 9 17.6 7.2 19.4 M9.3 15.7 C11.5 15.1 13.5 15.2 15 15.8" fill="none" stroke="#e0393e" stroke-width="1.15" stroke-linecap="round"/>
<circle cx="19.2" cy="18.2" r="2.6" fill="#fff" stroke="#2f8ad6" stroke-width="1.5"/>
<path d="M21 20.1 L23 21.9" stroke="#2f8ad6" stroke-width="1.7" stroke-linecap="round"/>
</svg>
<div class="c" style="left:752.85px;top:6.60px">AC</div>
<div class="c" style="left:814.65px;top:6.60px">STL</div>
<div class="c" style="left:898.35px;top:6.60px">A</div>
<div class="c" style="left:937.95px;top:6.60px">IFR</div>
<svg class="a" style="left:1051.75px;top:6.2px" width="16" height="16" viewBox="0 0 16 16">
<circle cx="8" cy="8" r="8" fill="#2185d0"/>
<circle cx="8" cy="3.9" r="1.3" fill="#fff"/>
<path d="M5.9 6.3 H9.2 V11.6 H10.3 V13.2 H5.9 V11.6 H7 V7.9 H5.9 Z" fill="#fff"/>
</svg>
<div class="c" style="left:1084.25px;top:6.60px">18-Jun-2020</div>
<div class="c lk" style="left:1163.15px;top:6.60px">SC198-DT-STL-WP203-0021</div>
<div class="c" style="left:1368.45px;top:6.60px">STL</div>
<div class="c" style="left:1440.05px;top:6.60px">NBC</div>
<div class="c" style="left:1511.95px;top:6.60px">ISSUED</div>
<div class="c" style="left:1585.85px;top:6.60px;width:144.10px;overflow:hidden"><b style="color:#2188d2">0 of 2 Actioned</b> <span style="color:#444">due 22-Jun-2020</span></div>
</div>
<div class="row s" style="top:445.35px"></div>
<div class="a" style="left:1734.3px;top:187px;width:7px;height:260px;background:#a9a9a9;border-radius:3px 0 0 0"></div>
</div></body></html>
